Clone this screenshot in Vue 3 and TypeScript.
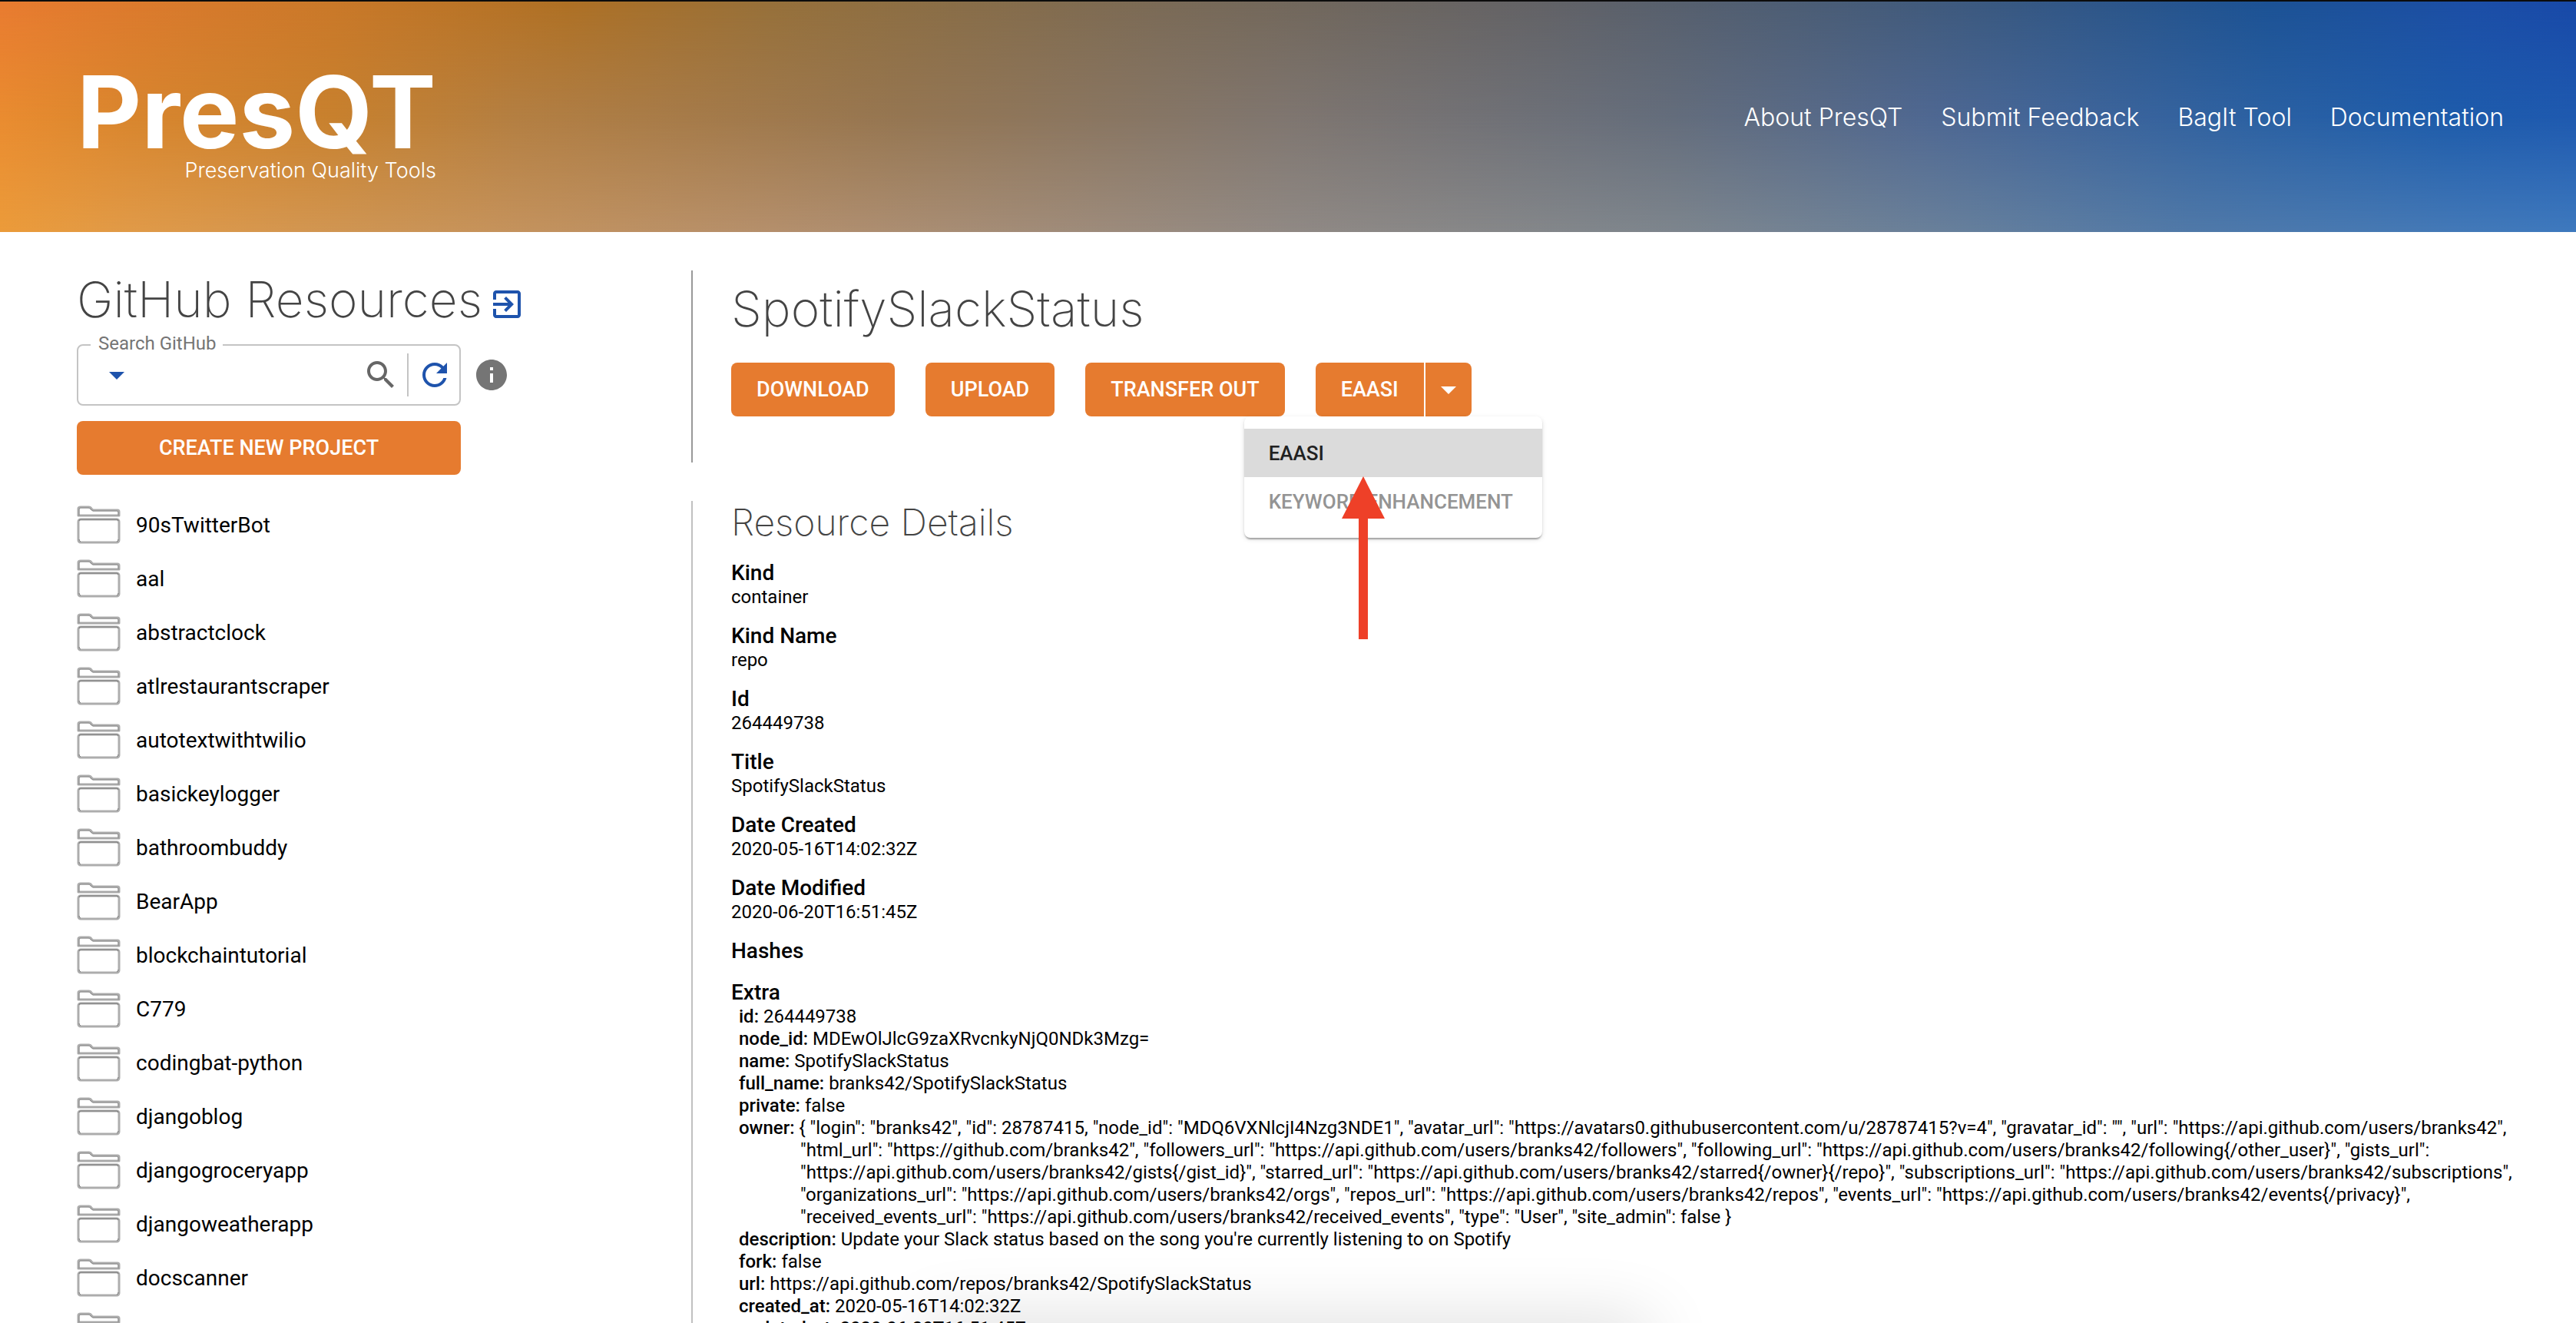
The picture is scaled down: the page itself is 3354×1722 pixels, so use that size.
<script setup lang="ts">
import { ref } from 'vue'

interface Field {
  label: string
  value?: string
}

const navLinks: string[] = ['About PresQT', 'Submit Feedback', 'BagIt Tool', 'Documentation']

const projects: string[] = [
  '90sTwitterBot',
  'aal',
  'abstractclock',
  'atlrestaurantscraper',
  'autotextwithtwilio',
  'basickeylogger',
  'bathroombuddy',
  'BearApp',
  'blockchaintutorial',
  'C779',
  'codingbat-python',
  'djangoblog',
  'djangogroceryapp',
  'djangoweatherapp',
  'docscanner',
  '',
]

const actions: string[] = ['Download', 'Upload', 'Transfer Out']

const fields: Field[] = [
  { label: 'Kind', value: 'container' },
  { label: 'Kind Name', value: 'repo' },
  { label: 'Id', value: '264449738' },
  { label: 'Title', value: 'SpotifySlackStatus' },
  { label: 'Date Created', value: '2020-05-16T14:02:32Z' },
  { label: 'Date Modified', value: '2020-06-20T16:51:45Z' },
  { label: 'Hashes' },
]

const api = 'https://api.github.com/users/branks42'
const owner = [
  '{ "login": "branks42"',
  '"id": 28787415',
  '"node_id": "MDQ6VXNlcjI4Nzg3NDE1"',
  '"avatar_url": "https://avatars0.githubusercontent.com/u/28787415?v=4"',
  '"gravatar_id": ""',
  `"url": "${api}"`,
  '"html_url": "https://github.com/branks42"',
  `"followers_url": "${api}/followers"`,
  `"following_url": "${api}/following{/other_user}"`,
  `"gists_url": "${api}/gists{/gist_id}"`,
  `"starred_url": "${api}/starred{/owner}{/repo}"`,
  `"subscriptions_url": "${api}/subscriptions"`,
  `"organizations_url": "${api}/orgs"`,
  `"repos_url": "${api}/repos"`,
  `"events_url": "${api}/events{/privacy}"`,
  `"received_events_url": "${api}/received_events"`,
  '"type": "User"',
  '"site_admin": false }',
].join(', ')

const extra: Field[] = [
  { label: 'id', value: '264449738' },
  { label: 'node_id', value: 'MDEwOlJlcG9zaXRvcnkyNjQ0NDk3Mzg=' },
  { label: 'name', value: 'SpotifySlackStatus' },
  { label: 'full_name', value: 'branks42/SpotifySlackStatus' },
  { label: 'private', value: 'false' },
  { label: 'owner', value: owner },
  { label: 'description', value: "Update your Slack status based on the song you're currently listening to on Spotify" },
  { label: 'fork', value: 'false' },
  { label: 'url', value: 'https://api.github.com/repos/branks42/SpotifySlackStatus' },
  { label: 'created_at', value: '2020-05-16T14:02:32Z' },
  { label: 'updated_at', value: '2020-06-20T16:51:45Z' },
]

const query = ref('')
const menuOpen = ref(true)
</script>

<template>
  <div class="page">
    <header class="banner">
      <div class="logo">
        <span class="logo-name">PresQT</span>
        <span class="logo-tag">Preservation Quality Tools</span>
      </div>
      <nav class="nav">
        <a v-for="link in navLinks" :key="link" href="#">{{ link }}</a>
      </nav>
    </header>

    <main class="body">
      <aside class="side">
        <div class="side-head">
          <h1>GitHub Resources</h1>
          <button class="icon-btn" type="button" aria-label="Change target">
            <svg viewBox="0 0 24 24" fill="#1e53ac"><path d="M10.09 15.59L11.5 17l5-5-5-5-1.41 1.41L12.67 11H3v2h9.67l-2.58 2.59zM19 3H5c-1.11 0-2 .9-2 2v4h2V5h14v14H5v-4H3v4c0 1.1.89 2 2 2h14c1.1 0 2-.9 2-2V5c0-1.1-.9-2-2-2z" /></svg>
          </button>
        </div>

        <form class="search-row" @submit.prevent>
          <div class="search-box">
            <label for="search">Search GitHub</label>
            <button class="icon-btn" type="button" aria-label="Search options">
              <svg viewBox="0 0 24 24" fill="#1e53ac"><path d="M7 10l5 5 5-5z" /></svg>
            </button>
            <input id="search" v-model="query" type="text" />
            <button class="icon-btn" type="submit" aria-label="Search">
              <svg viewBox="0 0 24 24" fill="#666"><path d="M15.5 14h-.79l-.28-.27C15.41 12.59 16 11.11 16 9.5 16 5.91 13.09 3 9.5 3S3 5.91 3 9.5 5.91 16 9.5 16c1.61 0 3.09-.59 4.23-1.57l.27.28v.79l5 4.99L20.49 19l-4.99-5zm-6 0C7.01 14 5 11.99 5 9.5S7.01 5 9.5 5 14 7.01 14 9.5 11.99 14 9.5 14z" /></svg>
            </button>
            <span class="rule"></span>
            <button class="icon-btn" type="button" aria-label="Refresh">
              <svg viewBox="0 0 24 24" fill="#1e53ac"><path d="M17.65 6.35C16.2 4.9 14.21 4 12 4c-4.42 0-7.99 3.58-7.99 8s3.57 8 7.99 8c3.73 0 6.84-2.55 7.73-6h-2.08c-.82 2.33-3.04 4-5.65 4-3.31 0-6-2.69-6-6s2.69-6 6-6c1.66 0 3.14.69 4.22 1.78L13 11h7V4l-2.35 2.35z" /></svg>
            </button>
          </div>
          <button class="icon-btn" type="button" aria-label="Search help">
            <svg viewBox="0 0 24 24" fill="#757575"><path d="M12 2C6.48 2 2 6.48 2 12s4.48 10 10 10 10-4.48 10-10S17.52 2 12 2zm1 15h-2v-6h2v6zm0-8h-2V7h2v2z" /></svg>
          </button>
        </form>

        <button class="btn create" type="button">Create New Project</button>

        <ul class="projects">
          <li v-for="(project, i) in projects" :key="i">
            <svg class="folder" viewBox="0 0 57 50" fill="none" stroke-linejoin="round">
              <path d="M2 13V4Q2 2 5 2H16Q18 2 19 4L21 6H53Q55 6 55 8V13Z" stroke="#adadad" stroke-width="3" />
              <path d="M1 13H56" stroke="#a8a8a8" stroke-width="2" />
              <path d="M3 13V5Q3 3 5 3H15Q17 3 18 5L21 7H52Q54 7 54 9V13" stroke="#8a8a8a" stroke-width="1" />
              <rect x="2" y="18" width="53" height="30" rx="3" stroke="#adadad" stroke-width="3" />
              <path d="M3 20Q3 18 5 18H52Q54 18 54 20M3 44Q3 46 5 47M54 44Q54 46 52 47" stroke="#777" stroke-width="1" />
            </svg>
            <span>{{ project }}</span>
          </li>
        </ul>
      </aside>

      <section class="content">
        <div class="summary">
          <h1>SpotifySlackStatus</h1>
          <div class="actions">
            <button v-for="action in actions" :key="action" class="btn" type="button">{{ action }}</button>
            <div class="split">
              <button class="btn split-main" type="button">EaaSI</button>
              <button class="btn split-toggle" type="button" aria-label="More services" @click="menuOpen = !menuOpen">
                <svg viewBox="0 0 24 24" fill="#fff"><path d="M7 10l5 5 5-5z" /></svg>
              </button>
              <div v-if="menuOpen" class="menu">
                <button class="selected" type="button">EaaSI</button>
                <button type="button">Keyword Enhancement</button>
                <svg class="pointer" viewBox="0 0 56 212" fill="#ee4028"><path d="M28 0L56 55H34V212H22V55H0Z" /></svg>
              </div>
            </div>
          </div>
        </div>

        <div class="details">
          <h2>Resource Details</h2>
          <dl>
            <div v-for="field in fields" :key="field.label" class="field">
              <dt>{{ field.label }}</dt>
              <dd v-if="field.value">{{ field.value }}</dd>
            </div>
            <div class="field">
              <dt>Extra</dt>
              <dd v-for="item in extra" :key="item.label" class="extra">
                <b>{{ item.label }}:</b> {{ item.value }}
              </dd>
            </div>
          </dl>
        </div>
      </section>
    </main>
    <div class="bottom-shade"></div>
  </div>
</template>

<style>
body {
  margin: 0;
  background: #fff;
}
</style>

<style scoped>
.page {
  position: relative;
  height: 100vh;
  overflow: hidden;
  background: #fff;
  color: #000;
  font-family: Roboto, "Liberation Sans", sans-serif;
}

h1,
h2,
dl,
dd,
ul {
  margin: 0;
  padding: 0;
}

h1,
h2 {
  color: #444;
  font-family: Inter, "Open Sans", sans-serif;
  font-weight: 200;
}

h1 {
  font-size: 64px;
  line-height: 80px;
}

button {
  padding: 0;
  border: 0;
  background: none;
  font-family: inherit;
  cursor: pointer;
}

/* Banner: three horizontal ramps blended from top to bottom */
.banner {
  position: relative;
  z-index: 0;
  display: flex;
  align-items: center;
  justify-content: space-between;
  padding: 64px 94px 64px 100px;
  border-top: 2px solid #0c0c0c;
  background: linear-gradient(to right, #ea8c30 0%, #d9862e 5%, #c8812e 13%, #b47f42 20%, #957652 35%, #7f7670 50%, #646d7c 65%, #4f6892 75%, #2b61a3 88%, #1e5cab 95%, #1f5ab0 100%);
  color: #fff;
}

.banner::before,
.banner::after {
  position: absolute;
  inset: 0;
  z-index: -1;
  content: "";
}

.banner::before {
  background: linear-gradient(to right, #e87b30 0%, #c97829 13%, #ae7024 22%, #96703a 30%, #7a6a56 45%, #626266 60%, #405a7c 75%, #1c5294 88%, #1c4ea6 96%, #1849a8 100%);
  mask-image: linear-gradient(to bottom, #000 0%, transparent 50%);
}

.banner::after {
  background: linear-gradient(to right, #eb9b3a 0%, #e09a48 5%, #cc9455 15%, #b48f6c 30%, #908984 50%, #7d858d 65%, #69809a 75%, #5079a8 85%, #3e79be 100%);
  mask-image: linear-gradient(to bottom, transparent 50%, #000 100%);
}

.logo {
  display: flex;
  flex-direction: column;
  align-items: flex-end;
  padding-top: 20px;
}

.logo-name {
  font-family: Inter, sans-serif;
  font-size: 130px;
  font-weight: 700;
  line-height: 120px;
}

.logo-tag {
  font-family: Inter, sans-serif;
  font-size: 27px;
  font-weight: 300;
  line-height: 32px;
}

.nav {
  display: flex;
  gap: 50px;
  padding-top: 2px;
}

.nav a {
  color: #fff;
  font-family: Inter, sans-serif;
  font-size: 32px;
  font-weight: 300;
  line-height: 40px;
  text-decoration: none;
}

.body {
  display: grid;
  grid-template-columns: 900px 1fr;
}

.side {
  padding: 48px 0 0 100px;
}

.side-head {
  display: flex;
  align-items: flex-end;
  gap: 8px;
}

.side-head .icon-btn {
  padding-bottom: 10px;
}

.icon-btn {
  display: flex;
}

.icon-btn svg {
  width: 48px;
  height: 48px;
}

.search-row {
  display: flex;
  align-items: center;
  gap: 16px;
  margin-top: 18px;
}

.search-box {
  position: relative;
  display: flex;
  align-items: center;
  box-sizing: border-box;
  width: 500px;
  height: 80px;
  padding: 0 8px 0 26px;
  border: 2px solid #c4c4c4;
  border-radius: 8px;
}

.search-box label {
  position: absolute;
  top: -18px;
  left: 16px;
  padding: 0 8px 0 10px;
  background: #fff;
  color: #757575;
  font-size: 24px;
  line-height: 30px;
}

.search-box input {
  flex: 1;
  min-width: 0;
  padding: 0;
  border: 0;
  outline: 0;
  background: none;
  font: inherit;
  font-size: 28px;
}

.rule {
  width: 2px;
  height: 56px;
  margin: 0 10px;
  background: #c4c4c4;
}

.btn {
  height: 70px;
  padding: 0 33px;
  border-radius: 8px;
  background: #e67b2f;
  color: #fff;
  font-size: 27px;
  font-weight: 500;
  text-transform: uppercase;
}

.create {
  width: 500px;
  margin-top: 20px;
}

.projects {
  margin-top: 30px;
  list-style: none;
}

.projects li {
  display: flex;
  align-items: center;
  gap: 20px;
  height: 70px;
  font-size: 28px;
}

.folder {
  width: 57px;
  height: 50px;
}

.content {
  padding-top: 50px;
}

.summary {
  box-sizing: border-box;
  height: 250px;
  padding: 10px 0 0 50px;
  border-left: 2px solid #999;
}

.actions {
  display: flex;
  gap: 40px;
  margin-top: 30px;
}

.split {
  position: relative;
  display: flex;
}

.split-main {
  border-right: 2px solid #fff;
  border-radius: 8px 0 0 8px;
}

.split-toggle {
  display: flex;
  align-items: center;
  justify-content: center;
  width: 60px;
  padding: 0;
  border-radius: 0 8px 8px 0;
}

.split-toggle svg {
  flex: none;
  width: 48px;
  height: 48px;
}

.menu {
  position: absolute;
  top: 70px;
  left: -93px;
  z-index: 1;
  min-width: 388px;
  padding: 16px 0;
  border-radius: 8px;
  background: #fff;
  box-shadow: 0 4px 2px -2px rgba(0, 0, 0, 0.2), 0 2px 2px rgba(0, 0, 0, 0.14), 0 2px 6px rgba(0, 0, 0, 0.12);
}

.menu button {
  display: block;
  width: 100%;
  height: 63px;
  padding: 0 32px;
  color: #949494;
  font-size: 26px;
  font-weight: 500;
  text-align: left;
  text-transform: uppercase;
  white-space: nowrap;
}

.menu .selected {
  background: #dbdbdb;
  color: #212121;
}

.pointer {
  position: absolute;
  top: 78px;
  left: 127px;
  width: 56px;
  height: 212px;
}

.details {
  margin-top: 50px;
  padding: 0 64px 0 50px;
  border-left: 2px solid #c0c0c0;
}

h2 {
  font-size: 48px;
  line-height: 56px;
}

dl {
  margin-top: 21px;
}

.field {
  margin-bottom: 20px;
}

dt {
  font-size: 28px;
  font-weight: 500;
  line-height: 34px;
}

dd {
  font-size: 24px;
  line-height: 28px;
}

.extra {
  padding-left: 90px;
  line-height: 29px;
  text-indent: -80px;
}

.extra b {
  font-weight: 500;
}

/* Soft shade rising from below the fold */
.bottom-shade {
  position: absolute;
  right: 36%;
  bottom: -60px;
  left: 36%;
  height: 60px;
  box-shadow: 0 0 90px rgba(0, 0, 0, 0.16);
}
</style>
